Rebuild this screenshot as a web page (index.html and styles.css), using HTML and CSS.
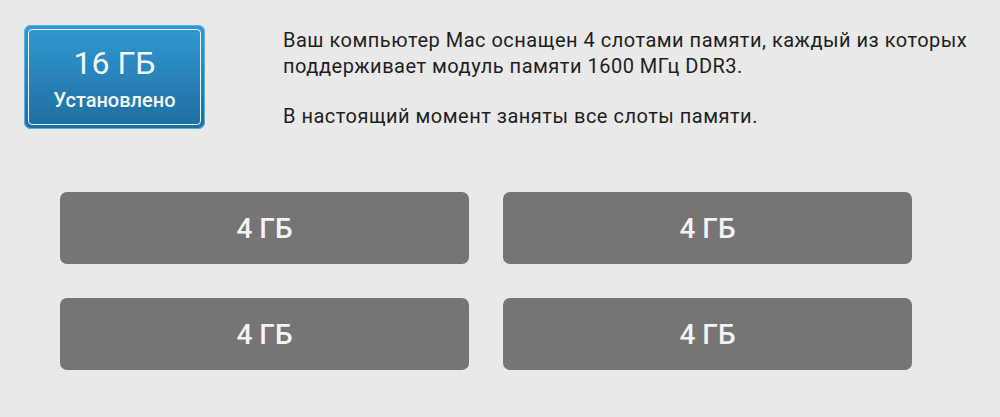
FILE: index.html
```html
<!DOCTYPE html>
<html lang="ru">
<head>
<meta charset="utf-8">
<link rel="stylesheet" href="styles.css">
</head>
<body>
<div class="page">
  <div class="top">
    <div class="badge">
      <div class="badge-inner">
        <div class="badge-size">16 ГБ</div>
        <div class="badge-label">Установлено</div>
      </div>
    </div>
    <div class="info">
      <p>Ваш компьютер Mac оснащен 4 слотами памяти, каждый из которых поддерживает модуль памяти 1600 МГц DDR3.</p>
      <p>В настоящий момент заняты все слоты памяти.</p>
    </div>
  </div>
  <div class="slots">
    <div class="slot">4 ГБ</div>
    <div class="slot">4 ГБ</div>
    <div class="slot">4 ГБ</div>
    <div class="slot">4 ГБ</div>
  </div>
</div>
</body>
</html>
```
FILE: styles.css
```css
html, body {
  margin: 0;
  padding: 0;
  background: #e9e9e9;
}
body {
  font-family: "Roboto", "Liberation Sans", sans-serif;
  color: #1e1e1e;
  width: 1000px;
  height: 417px;
  overflow: hidden;
}
.page {
  padding: 25px 0 0 24px;
}
.top {
  display: flex;
  align-items: flex-start;
  height: 104px;
}
.badge {
  width: 181px;
  height: 104px;
  box-sizing: border-box;
  border-radius: 7px;
  padding: 4px;
  background: linear-gradient(#3199d2, #1e6d9f);
  box-shadow: 0 0 0 1px #5aaee0 inset;
}
.badge-inner {
  height: 100%;
  box-sizing: border-box;
  border: 1.5px solid #e8f4fb;
  border-radius: 4px;
  color: #f4f8fb;
  text-align: center;
}
.badge-size {
  font-size: 32px;
  margin-top: 16px;
  line-height: 34px;
}
.badge-label {
  font-size: 20px;
  font-weight: 500;
  margin-top: 8px;
  line-height: 24px;
}
.info {
  margin-left: 78px;
  margin-top: 2px;
  font-size: 20px;
  line-height: 26px;
  width: 705px;
  letter-spacing: 0.5px;
}
.info p {
  margin: 0 0 24px 0;
}
.info p:last-child {
  margin-bottom: 0;
}
.slots {
  display: grid;
  grid-template-columns: 409px 409px;
  column-gap: 34px;
  row-gap: 34px;
  margin: 63px 0 0 36px;
}
.slot {
  height: 72px;
  border-radius: 7px;
  background: #757575;
  color: #f3f3f3;
  font-size: 28px;
  font-weight: 500;
  display: flex;
  align-items: center;
  justify-content: center;
}
```
